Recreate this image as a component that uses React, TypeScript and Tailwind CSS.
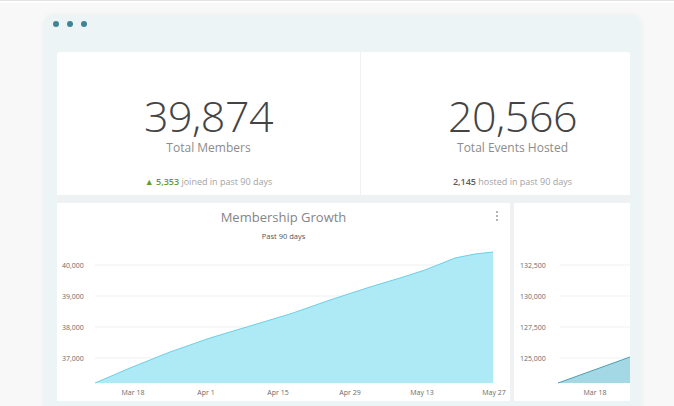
import React from "react";

const growth = [
  [38, 138], [73, 123], [113, 107], [153, 93], [193, 81], [233, 69], [273, 55],
  [313, 42], [343, 33], [368, 25], [398, 13], [418, 9], [436, 7],
];

function StatCard({
  value,
  label,
  highlight,
  rest,
  green,
}: {
  value: string;
  label: string;
  highlight: string;
  rest: string;
  green?: boolean;
}) {
  return (
    <div className="w-[303px] shrink-0 bg-white flex flex-col items-center pt-[44px]">
      <div className="text-[43px] leading-[40px] font-light text-[#444] tracking-[-0.5px]">{value}</div>
      <div className="mt-[4px] text-[12px] leading-[16px] text-[#8c8c8c]">{label}</div>
      <div className="mt-[20px] text-[9px] leading-[12px] text-[#a3a3a3]">
        {green ? (
          <span className="text-[#5a9d3a] font-semibold">▲ {highlight}</span>
        ) : (
          <span className="text-[#5b5b5b] font-semibold">{highlight}</span>
        )}{" "}
        {rest}
      </div>
    </div>
  );
}

function Kebab() {
  return (
    <div className="flex flex-col gap-[2px]">
      <span className="w-[2px] h-[2px] rounded-full bg-[#9a9a9a]" />
      <span className="w-[2px] h-[2px] rounded-full bg-[#9a9a9a]" />
      <span className="w-[2px] h-[2px] rounded-full bg-[#9a9a9a]" />
    </div>
  );
}

function GrowthChart() {
  const line = growth.map(([x, y]) => `${x},${y}`).join(" ");
  const area = `38,138 ${line} 436,138`;
  const yLabels = [
    ["40,000", 20],
    ["39,000", 51],
    ["38,000", 82],
    ["37,000", 113],
  ] as const;
  const xLabels = [
    ["Mar 18", 76],
    ["Apr 1", 149],
    ["Apr 15", 221],
    ["Apr 29", 293],
    ["May 13", 365],
    ["May 27", 437],
  ] as const;
  return (
    <svg width="453" height="156" viewBox="0 0 453 156" className="block">
      {yLabels.map(([t, y]) => (
        <g key={t}>
          <line x1="38" x2="436" y1={y} y2={y} stroke="#efefef" strokeWidth="1" />
          <text x="5" y={y + 2.5} fontSize="7" fill="#6a6a6a" fontFamily="Open Sans, sans-serif">
            {t}
          </text>
        </g>
      ))}
      <polygon points={area} fill="#aeeaf6" />
      <polyline points={line} fill="none" stroke="#6ccfe5" strokeWidth="1" />
      {xLabels.map(([t, x]) => (
        <text key={t} x={x} y="150" fontSize="7" fill="#6a6a6a" textAnchor="middle" fontFamily="Open Sans, sans-serif">
          {t}
        </text>
      ))}
    </svg>
  );
}

function SecondChart() {
  const yLabels = [
    ["132,500", 20],
    ["130,000", 51],
    ["127,500", 82],
    ["125,000", 113],
  ] as const;
  return (
    <svg width="300" height="156" viewBox="0 0 300 156" className="block">
      {yLabels.map(([t, y]) => (
        <g key={t}>
          <line x1="46" x2="300" y1={y} y2={y} stroke="#f1f1f1" strokeWidth="1" />
          <text x="6" y={y + 2.5} fontSize="7" fill="#6a6a6a" fontFamily="Open Sans, sans-serif">
            {t}
          </text>
        </g>
      ))}
      <polygon points="44,138 116,112 300,46 300,138" fill="#a3d8e4" />
      <polyline points="44,138 116,112 300,46" fill="none" stroke="#4d9fb3" strokeWidth="1" />
      <text x="81" y="150" fontSize="7" fill="#6a6a6a" textAnchor="middle" fontFamily="Open Sans, sans-serif">
        Mar 18
      </text>
    </svg>
  );
}

export default function App() {
  return (
    <div className="w-[674px] h-[406px] overflow-hidden bg-[#f8f8f8] font-['Open_Sans',sans-serif] antialiased">
      <div className="h-[3px] border-t border-[#e4e4e4] bg-white" />
      <div className="ml-[44px] mt-[12px] w-[597px] h-[420px] rounded-t-[10px] bg-[#edf4f6] shadow-[0_0_6px_rgba(0,0,0,0.05)] pt-[6px]">
        <div className="flex gap-[8px] pl-[9px]">
          <span className="w-[6px] h-[6px] rounded-full bg-[#3b8595]" />
          <span className="w-[6px] h-[6px] rounded-full bg-[#3b8595]" />
          <span className="w-[6px] h-[6px] rounded-full bg-[#3b8595]" />
        </div>
        <div className="mt-[25px] ml-[13px] w-[573px] overflow-hidden bg-[#eef2f3] flex flex-col gap-[8px] rounded-t-[3px]">
          <div className="flex gap-[1px] h-[143px]">
            <StatCard value="39,874" label="Total Members" highlight="5,353" rest="joined in past 90 days" green />
            <StatCard value="20,566" label="Total Events Hosted" highlight="2,145" rest="hosted in past 90 days" />
          </div>
          <div className="flex gap-[4px] h-[198px]">
            <div className="w-[453px] shrink-0 bg-white flex flex-col">
              <div className="relative h-[42px] flex flex-col items-center pt-[5px]">
                <div className="text-[13px] leading-[18px] text-[#858585]">Membership Growth</div>
                <div className="mt-[5px] text-[7.5px] leading-[10px] text-[#555]">Past 90 days</div>
                <div className="absolute right-[12px] top-[8px]">
                  <Kebab />
                </div>
              </div>
              <GrowthChart />
            </div>
            <div className="w-[300px] shrink-0 bg-white flex flex-col">
              <div className="h-[42px]" />
              <SecondChart />
            </div>
          </div>
        </div>
      </div>
    </div>
  );
}
